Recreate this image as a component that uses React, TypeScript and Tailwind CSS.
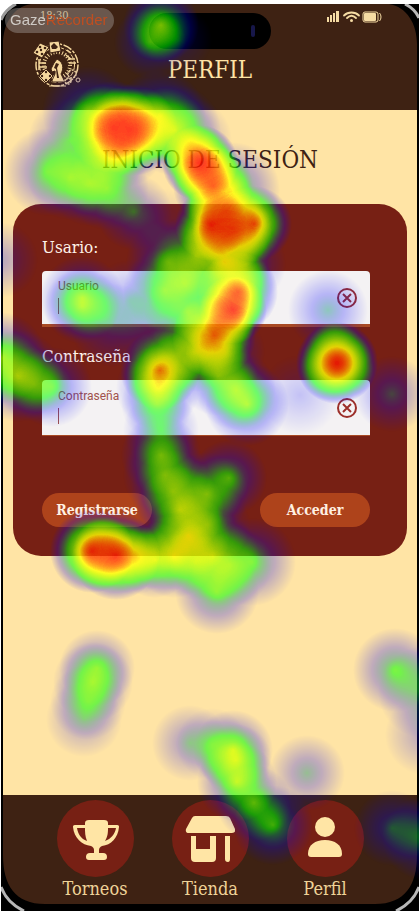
import React from "react";

const slab = "font-['DejaVu_Serif_Condensed','DejaVu_Serif',serif]";

// Gaze fixations: x, y, radius, strength, repetitions
const fixations: [number, number, number, number, number][] = [
  [161, 25, 38, 0.42, 2], [150, 42, 36, 0.42, 1], [178, 40, 34, 0.2, 1],
  [113, 127, 46, 0.7, 2], [132, 130, 46, 0.7, 2], [122, 144, 44, 0.6, 1], [122, 124, 30, 0.4, 1],
  [88, 112, 46, 0.5, 1], [70, 140, 42, 0.4, 1], [48, 172, 44, 0.5, 1], [70, 178, 42, 0.45, 1], [90, 184, 42, 0.45, 1], [107, 188, 42, 0.5, 1], [108, 160, 36, 0.35, 1], [134, 212, 38, 0.42, 1], [160, 228, 40, 0.15, 1],
  [160, 116, 46, 0.6, 1], [175, 130, 46, 0.6, 1], [190, 140, 42, 0.35, 1],
  [200, 163, 38, 0.75, 3], [213, 186, 40, 0.62, 2], [232, 190, 48, 0.6, 1], [226, 210, 38, 0.5, 1],
  [211, 225, 36, 0.75, 2], [254, 224, 38, 0.72, 2], [232, 230, 40, 0.45, 2], [222, 244, 38, 0.4, 1],
  [196, 256, 44, 0.5, 1], [224, 262, 48, 0.6, 1], [246, 264, 40, 0.4, 1], [168, 262, 42, 0.45, 1], [165, 290, 42, 0.48, 1], [185, 284, 42, 0.4, 1], [188, 312, 44, 0.5, 1], [155, 325, 40, 0.25, 1],
  [238, 292, 40, 0.65, 2], [233, 310, 34, 0.75, 2], [218, 322, 38, 0.35, 1], [214, 336, 42, 0.62, 2], [196, 352, 40, 0.5, 1], [225, 352, 40, 0.4, 1],
  [82, 298, 42, 0.6, 1], [82, 306, 38, 0.5, 1], [130, 300, 40, 0.3, 1], [112, 325, 42, 0.35, 1], [328, 310, 40, 0.42, 1],
  [160, 370, 40, 0.65, 2], [158, 388, 42, 0.55, 1], [157, 404, 36, 0.4, 1], [161, 430, 38, 0.38, 1], [178, 355, 36, 0.25, 1],
  [218, 376, 40, 0.5, 1], [247, 404, 42, 0.65, 1], [236, 390, 40, 0.5, 1],
  [337, 363, 41, 0.77, 3], [300, 395, 40, 0.2, 1],
  [0, 358, 46, 0.65, 1], [18, 376, 46, 0.58, 1], [34, 384, 38, 0.35, 1], [52, 387, 40, 0.5, 1],
  [392, 394, 38, 0.4, 1], [0, 260, 38, 0.3, 1],
  [161, 455, 40, 0.52, 1], [165, 475, 42, 0.45, 1], [173, 492, 42, 0.42, 1], [180, 510, 44, 0.55, 1],
  [229, 478, 38, 0.55, 1], [207, 494, 42, 0.5, 1], [208, 525, 42, 0.42, 1],
  [188, 536, 42, 0.58, 1], [174, 556, 42, 0.65, 1], [155, 560, 38, 0.6, 1], [195, 562, 38, 0.35, 1],
  [92, 551, 42, 0.78, 2], [116, 556, 44, 0.78, 2], [134, 557, 38, 0.45, 1],
  [213, 556, 46, 0.55, 1], [230, 565, 42, 0.35, 1], [252, 562, 44, 0.52, 1], [217, 592, 42, 0.58, 1],
  [97, 668, 38, 0.52, 1], [93, 682, 40, 0.48, 1], [88, 702, 38, 0.38, 1], [84, 719, 38, 0.32, 1],
  [190, 743, 38, 0.37, 1], [212, 744, 36, 0.3, 1], [233, 750, 40, 0.62, 1], [236, 760, 36, 0.48, 1], [237, 782, 40, 0.62, 1],
  [254, 803, 38, 0.52, 1], [273, 825, 40, 0.58, 1], [307, 773, 38, 0.41, 1],
  [395, 670, 42, 0.55, 1], [424, 692, 46, 0.45, 1], [425, 735, 40, 0.3, 1],
  [392, 828, 38, 0.38, 1], [424, 838, 42, 0.48, 1],
];

function Heatmap() {
  return (
    <svg className="pointer-events-none absolute top-0 left-0" width="419" height="915" viewBox="0 0 419 915" aria-hidden="true">
      <defs>
        <radialGradient id="spot">
          <stop offset="0" stopColor="#000" stopOpacity="1" />
          <stop offset="1" stopColor="#000" stopOpacity="0" />
        </radialGradient>
        <filter id="heat" filterUnits="userSpaceOnUse" x="0" y="0" width="419" height="915" colorInterpolationFilters="sRGB">
          <feColorMatrix values="0 0 0 1 0  0 0 0 1 0  0 0 0 1 0  0 0 0 1 0" />
          <feComponentTransfer>
            <feFuncR type="table" tableValues="0 0 0 0 0 0 0 0 0 0 0 0 .167 .333 .5 .667 .833 1 1 1 1" />
            <feFuncG type="table" tableValues="0 0 0 0 0 0 .167 .333 .5 .667 .833 1 1 1 1 1 1 1 .667 .333 0" />
            <feFuncB type="table" tableValues="1 1 1 1 1 1 .833 .667 .5 .333 .167 0 0 0 0 0 0 0 0 0 0" />
            <feFuncA type="table" tableValues="0 .05 .1 .15 .2 .25 .3 .35 .4 .45 .5 .55 .6 .65 .7 .75 .8 .8 .8 .8 .8" />
          </feComponentTransfer>
        </filter>
        <clipPath id="shot"><rect x="1" y="4" width="418" height="907" /></clipPath>
      </defs>
      <g clipPath="url(#shot)">
        <g filter="url(#heat)">
          {fixations.flatMap(([x, y, r, a, n], i) =>
            Array.from({ length: n }, (_, k) => (
              <circle key={`${i}-${k}`} cx={x} cy={y} r={r} fill="url(#spot)" opacity={a} />
            ))
          )}
        </g>
      </g>
    </svg>
  );
}

function Logo() {
  return (
    <svg width="50" height="48" viewBox="0 0 50 48" fill="none" stroke="#f5d79c" aria-label="Logo">
      <circle cx="25" cy="25" r="21" strokeWidth="1.500" strokeDasharray="9 1.5 3 1.5" />
      <circle cx="25" cy="25" r="17.500" strokeWidth="1" strokeDasharray="5 2" />
      <circle cx="25" cy="25" r="13" strokeWidth="4" strokeDasharray="1 2" />
      <g fill="#f5d79c" stroke="#3e2213" strokeWidth="1">
        <path d="M8 3 17 7 10 18 1 13Z" />
        <path d="M17 2 27 1 29 11 18 13Z" />
        <path d="M7 36 14 29 21 36 14 43Z" />
        <path d="M20 42c0-4 4-7 3-11l-3 1-1-3 3-6 3-4 3 2c4 4 3 9 1 13l4 8Z" />
      </g>
      <g fill="#3e2213" stroke="none">
        <circle cx="8" cy="7" r="1.300" /><circle cx="13" cy="8" r="1.300" /><circle cx="5" cy="12" r="1.300" /><circle cx="10" cy="14" r="1.300" /><circle cx="9" cy="10" r="1.200" />
        <path d="m22 3 4 4-2 2h-4l-1-3Z" />
        <circle cx="14" cy="32" r="1.200" /><circle cx="10" cy="36" r="1.200" /><circle cx="18" cy="36" r="1.200" /><circle cx="14" cy="40" r="1.200" />
        <path d="m24 23 3 1-2 4 2 10h-2l-1-9-2-1Z" />
      </g>
      <path d="m35 10 4 3m-5 2 5 4m-3 0h7m-6 4h7M7 23h7m-7 4h8M7 19v11" strokeWidth="1.500" />
      <circle cx="40" cy="34" r="4" strokeWidth="1.500" strokeDasharray="2 1" />
      <circle cx="36" cy="41" r="3" strokeWidth="1.500" strokeDasharray="2 1" />
      <circle cx="46" cy="40" r="2" strokeWidth="1" />
      <path d="M17 46h17" strokeWidth="1" />
    </svg>
  );
}

function StatusIcons() {
  return (
    <svg width="57" height="14" viewBox="0 0 57 14" fill="none" aria-hidden="true">
      <g fill="#f5dba3">
        <rect x="1" y="8" width="2" height="5" /><rect x="4" y="6" width="2" height="7" /><rect x="7" y="4" width="2" height="9" /><rect x="10" y="2" width="3" height="11" />
      </g>
      <g stroke="#f5dba3" strokeWidth="1.800" strokeLinecap="round">
        <path d="M18 6.500c4-4 11-4 15 0M21 9c3-3 6-3 9 0" />
      </g>
      <circle cx="25.500" cy="11.500" r="1.500" fill="#f5dba3" />
      <rect x="37" y="3" width="15" height="10" rx="2" stroke="#f5dba3" />
      <rect x="38" y="4" width="12" height="8" rx="1" fill="#f5dba3" />
      <path d="M53.500 4c2 2 2 6 0 8" stroke="#f5dba3" />
    </svg>
  );
}

function FrameCorners() {
  return (
    <>
      <svg className="absolute top-1 left-px" width="34" height="40" viewBox="0 0 34 40" aria-hidden="true">
        <path d="M0 0h30C12 3 2 20 2 40H0Z" fill="#000" />
        <path d="M0 0h14Q4 5 0 15Z" fill="#fff" />
        <path d="M0 16Q4 6 15 0" fill="none" stroke="#9a9a9a" strokeWidth="3" />
      </svg>
      <svg className="absolute top-1 right-0" width="34" height="40" viewBox="0 0 34 40" aria-hidden="true">
        <path d="M34 0H4c18 3 28 20 28 40h2Z" fill="#000" />
        <path d="M20 0Q30 5 34 14" fill="none" stroke="#b8b8b8" strokeWidth="3" />
      </svg>
      <svg className="absolute bottom-1 left-px" width="44" height="56" viewBox="0 0 44 56" aria-hidden="true">
        <path d="M0 0h2C2 30 14 49 44 49v7H0Z" fill="#000" />
        <path d="M0 32Q6 48 23 56" fill="none" stroke="#b8b8b8" strokeWidth="3" />
      </svg>
      <svg className="absolute right-0 bottom-1" width="44" height="56" viewBox="0 0 44 56" aria-hidden="true">
        <path d="M44 0h-2C42 30 30 49 0 49v7h44Z" fill="#000" />
        <path d="M44 32Q38 48 21 56" fill="none" stroke="#b8b8b8" strokeWidth="3" />
      </svg>
    </>
  );
}

type FieldProps = { id: string; title: string; hint: string; type: string; line: string };

function Field({ id, title, hint, type, line }: FieldProps) {
  return (
    <div>
      <label htmlFor={id} className={`${slab} block h-6 text-[17px] leading-6 text-[#fff2e8]`}>{title}</label>
      <div className={`mt-3 flex h-14 items-center rounded-t border-[#a84a24] bg-[#f4f2f3] pr-3 pl-4 ${line}`}>
        <div className="min-w-0 flex-1">
          <span className="block font-[Roboto,sans-serif] text-xs leading-4 text-[#a0524c]">{hint}</span>
          <div className="flex h-6 items-center">
            <span className="h-4 w-px bg-[#a0524c]" />
            <input id={id} type={type} className="h-6 w-full min-w-0 bg-transparent px-1 text-sm text-[#3e2213] outline-none" />
          </div>
        </div>
        <button type="button" aria-label="Borrar">
          <svg width="22" height="22" viewBox="0 0 22 22" fill="none" stroke="#9c2f2a" strokeWidth="2">
            <circle cx="11" cy="11" r="9" />
            <path d="m7 7 8 8m0-8-8 8" />
          </svg>
        </button>
      </div>
    </div>
  );
}

function NavItem({ label, children }: { label: string; children: React.ReactNode }) {
  return (
    <a href="#" className="flex w-[115px] flex-col items-center">
      <span className="flex size-[77px] items-center justify-center rounded-full bg-[#772014]">
        <svg width="50" height="50" viewBox="0 0 50 50" fill="#ffe5a5" aria-hidden="true">{children}</svg>
      </span>
      <span className={`${slab} text-lg leading-6 text-[#efd398]`}>{label}</span>
    </a>
  );
}

export default function App() {
  return (
    <div className="relative flex min-h-screen flex-col overflow-hidden bg-white py-1 pl-px">
      <div className="flex flex-1 flex-col border-r-2 border-b-[7px] border-l-2 border-black bg-[#ffe4a5]">
        <header className="relative h-[106px] bg-[#3e2213]">
          <div className={`${slab} flex items-center justify-between pt-1 pr-[34px] pl-[37px] text-[11px] leading-4 text-[#f5dba3]`}>
            <span>18:30</span>
            <StatusIcons />
          </div>
          <div className="absolute top-[9px] left-1/2 flex h-9 w-[122px] -translate-x-1/2 items-center justify-end rounded-full bg-black pr-4">
            <span className="h-3 w-1 rounded-full bg-[#17174a]" />
          </div>
          <div className="grid grid-cols-[80px_1fr_80px] items-center pt-4">
            <span className="pl-[29px]"><Logo /></span>
            <h1 className={`${slab} pt-3 text-center text-2xl leading-8 text-[#ffe4a5]`}>PERFIL</h1>
          </div>
        </header>

        <main className="flex-1 px-[10px] pt-[34px]">
          <h2 className={`${slab} text-center text-2xl leading-8 text-[#3e2213]`}>INICIO DE SESIÓN</h2>
          <form className="mt-7 rounded-[28px] bg-[#772014] pt-[31px] pr-[37px] pb-[29px] pl-[29px]">
            <Field id="usuario" title="Usario:" hint="Usuario" type="text" line="border-b-3" />
            <div className="mt-[17px]">
              <Field id="clave" title="Contraseña" hint="Contraseña" type="password" line="border-b" />
            </div>
            <div className={`${slab} mt-[57px] flex justify-between text-sm font-bold text-[#fff0e2]`}>
              <button type="button" className="h-[34px] w-[110px] rounded-full bg-[#ae431b]">Registrarse</button>
              <button type="submit" className="h-[34px] w-[110px] rounded-full bg-[#ae431b]">Acceder</button>
            </div>
          </form>
        </main>

        <nav className="flex h-[109px] justify-center bg-[#3e2213] pt-[5px]">
          <NavItem label="Torneos">
            <path d="M15 9q0-3 4-3h15q4 0 4 3v2h9c2 0 2 1 2 2-1 11-8 18-17 19-2 1-3 2-3 4v3h4q4 0 4 4 0 3-3 3H19q-3 0-3-3 0-4 4-4h4v-3c0-2-1-3-3-4C12 31 4 24 3 13c0-1 0-2 2-2h10Zm0 5H7c1 6 4 11 10 13-2-5-2-9-2-13Zm23 0c0 4 0 8-3 13 6-2 10-7 11-13Z" fillRule="evenodd" />
          </NavItem>
          <NavItem label="Tienda">
            <path d="M7 4Q8 2 10 2h31q3 0 4 2l5 11q1 4-3 4H4q-4 0-3-4ZM6 22h5v13h14V22h6v22q0 4-4 4H10q-4 0-4-4ZM40 22h5v23q0 3-2 3-3 0-3-3Z" />
          </NavItem>
          <NavItem label="Perfil">
            <circle cx="25" cy="13" r="10" />
            <path d="M8 40c0-9 7-14 17-14s17 5 17 14q0 3-3 3H11q-3 0-3-3Z" />
          </NavItem>
        </nav>
      </div>
      <FrameCorners />
      <Heatmap />
      <div className="absolute top-2 left-[5px] flex h-[25px] w-[109px] items-center rounded-full bg-[#a09a94]/45 pl-[5px] font-['Liberation_Sans',sans-serif] text-[15px]">
        <span className="text-[#cfcac5]">Gaze</span>
        <span className="text-[#c04e20]">Recorder</span>
      </div>
    </div>
  );
}
